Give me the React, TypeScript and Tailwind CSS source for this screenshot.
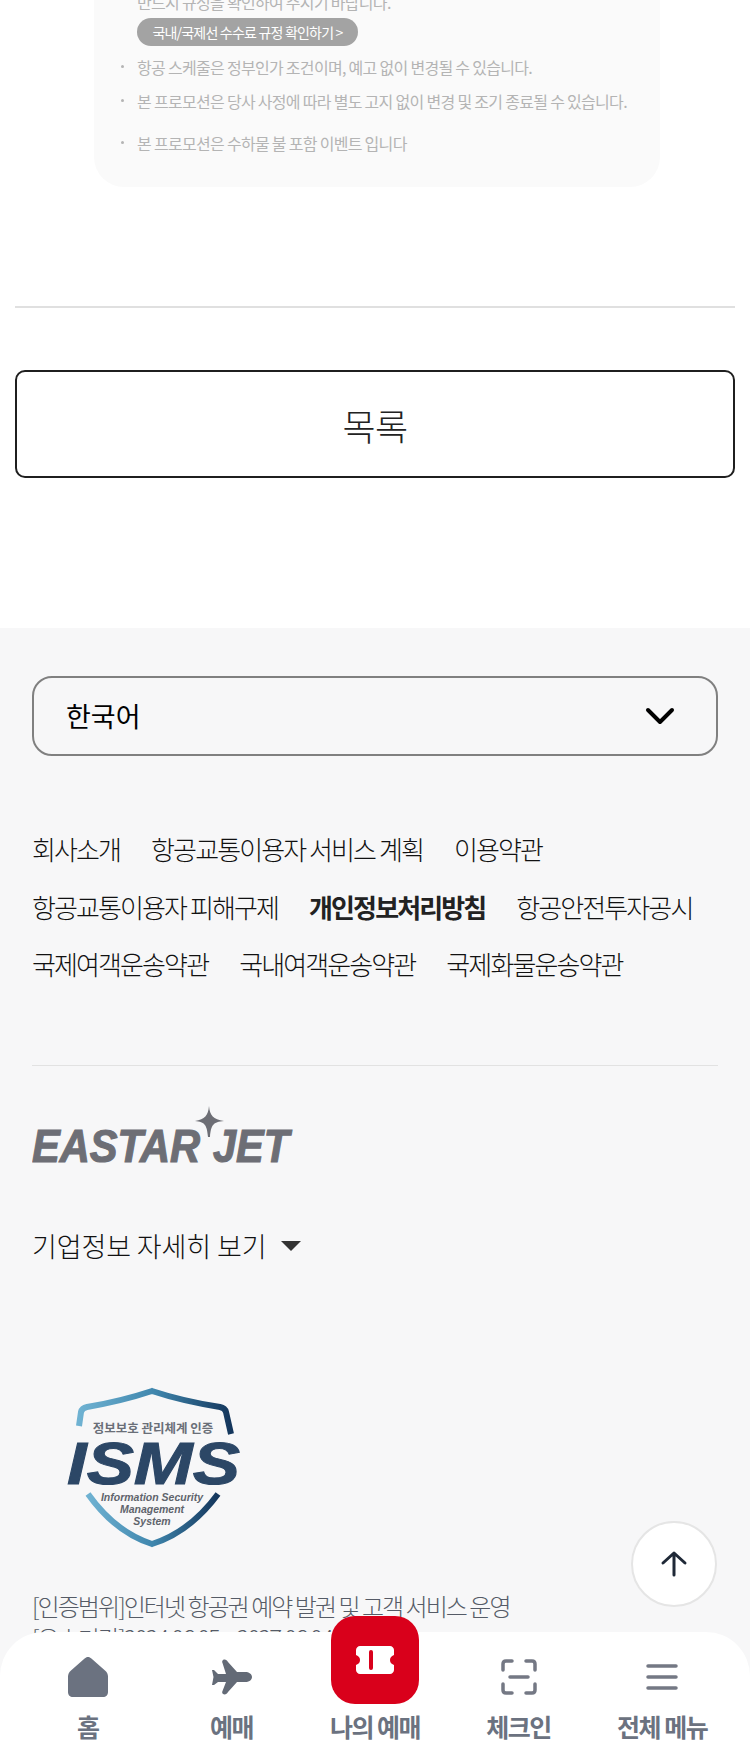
import React from "react";

const KR = "font-['Noto_Sans_CJK_KR','Noto_Sans',sans-serif]";

function Logo() {
  return (
    <svg width="262" height="60" viewBox="0 0 262 60" className="block">
      <g fill="#6d6e75" stroke="#6d6e75" strokeWidth="1.2" fontFamily="Liberation Sans, sans-serif" fontWeight="700" fontStyle="italic">
        <text x="0" y="58" fontSize="47" textLength="168" lengthAdjust="spacingAndGlyphs">EASTAR</text>
        <text x="181" y="58" fontSize="47" textLength="76" lengthAdjust="spacingAndGlyphs">JET</text>
      </g>
      <path d="M177 2c1 10 4 13 15 15-11 1-13 4-14 16h-2c-1-12-3-15-13-16 10-2 13-5 14-15z" fill="#6d6e75" />
    </svg>
  );
}

function Isms() {
  return (
    <svg width="190" height="165" viewBox="0 0 190 165" className="block">
      <defs>
        <linearGradient id="shield" x1="0" y1="0" x2="1" y2="0">
          <stop offset="0" stopColor="#6fb2d2" />
          <stop offset="0.5" stopColor="#3f86ad" />
          <stop offset="1" stopColor="#14365c" />
        </linearGradient>
      </defs>
      <path d="M19 40 L21 26 Q22 22 27 21 Q62 15 92 5 Q122 15 160 21 Q165 22 166 26 L171 48" fill="none" stroke="url(#shield)" strokeWidth="6" />
      <path d="M28 108 Q55 146 92 158 Q130 146 158 108" fill="none" stroke="url(#shield)" strokeWidth="6" />
      <text x="93" y="47" textAnchor="middle" fontSize="12.500" fontWeight="700" fill="#6a6f78" className={KR}>정보보호 관리체계 인증</text>
      <text x="7" y="98" fontSize="59" fontWeight="700" fontStyle="italic" fill="#2c4766" stroke="#2c4766" strokeWidth="1" fontFamily="Liberation Sans, sans-serif" textLength="173" lengthAdjust="spacingAndGlyphs">ISMS</text>
      <g textAnchor="middle" fontSize="10.500" fontWeight="700" fontStyle="italic" fill="#5f646c" fontFamily="Liberation Sans, sans-serif">
        <text x="92" y="115">Information Security</text>
        <text x="92" y="127">Management</text>
        <text x="92" y="139">System</text>
      </g>
    </svg>
  );
}

function NavItem({ label, icon }: { label: string; icon?: React.ReactNode }) {
  return (
    <div className="flex flex-col items-center">
      <div className="flex h-[44px] w-full items-center justify-center">{icon}</div>
      <div className="mt-[9px] whitespace-nowrap text-[25px] font-semibold leading-[36px] tracking-[-1.5px] text-[#6b7280]">{label}</div>
    </div>
  );
}

const links = [
  ["회사소개", "항공교통이용자 서비스 계획", "이용약관"],
  ["항공교통이용자 피해구제", "개인정보처리방침", "항공안전투자공시"],
  ["국제여객운송약관", "국내여객운송약관", "국제화물운송약관"],
];

const bullet = "relative before:absolute before:-left-[16px] before:top-[10px] before:h-[3px] before:w-[3px] before:rounded-full before:bg-[#b4b4b4]";

export default function App() {
  return (
    <div className={`relative h-[1750px] w-[750px] overflow-hidden bg-white ${KR}`}>
      <section className="ml-[94px] -mt-[10px] h-[197px] w-[566px] rounded-b-[30px] bg-[#fafafa] pl-[43px] text-[16px] leading-[24px] tracking-[-0.7px] text-[#b4b4b4]">
        <p>반드시 규정을 확인하여 주시기 바랍니다.</p>
        <div className="mt-[4px] flex h-[28px] w-[221px] items-center justify-center rounded-full bg-[#a3a3a3] text-[14px] tracking-[-0.8px] text-white">
          국내/국제선 수수료 규정 확인하기 &gt;
        </div>
        <ul className="mt-[9px]">
          <li className={`${bullet} h-[24px]`}>항공 스케줄은 정부인가 조건이며, 예고 없이 변경될 수 있습니다.</li>
          <li className={`${bullet} mt-[10px] h-[24px] whitespace-nowrap`}>본 프로모션은 당사 사정에 따라 별도 고지 없이 변경 및 조기 종료될 수 있습니다.</li>
          <li className={`${bullet} mt-[18px] h-[24px]`}>본 프로모션은 수하물 불 포함 이벤트 입니다</li>
        </ul>
      </section>

      <div className="mx-[15px] mt-[119px] h-[2px] bg-[#e0e0e0]" />
      <button className="mx-[15px] mt-[62px] flex h-[108px] w-[720px] items-center justify-center rounded-[10px] border-2 border-[#1f1f1f] pt-[2px] text-[36px] font-light tracking-[-0.5px] text-[#222]">
        목록
      </button>

      <footer className="mt-[150px] h-[1122px] bg-[#f7f7f8] px-[32px] pt-[48px]">
        <div className="flex h-[80px] w-[686px] items-center justify-between rounded-[20px] border-2 border-[#808080] pl-[32px] pr-[41px] text-[27px] text-black">
          <span>한국어</span>
          <svg width="30" height="18" viewBox="0 0 30 18" fill="none" stroke="#000" strokeWidth="4" strokeLinecap="round" strokeLinejoin="round">
            <path d="M3 3l12 12L27 3" />
          </svg>
        </div>

        <div className="mt-[75px] flex flex-col gap-[21.500px] border-b border-[#e2e2e2] pb-[83px]">
          {links.map((row, i) => (
            <div key={i} className="flex h-[36px] items-center gap-[31px] whitespace-nowrap text-[26px] font-light leading-[36px] tracking-[-1.9px] text-[#111]">
              {row.map((t) => (
                <span key={t} className={t === "개인정보처리방침" ? "font-bold text-[#222]" : ""}>{t}</span>
              ))}
            </div>
          ))}
        </div>

        <div className="mt-[38px]"><Logo /></div>

        <div className="mt-[62px] flex items-center gap-[15px] text-[27px] font-light leading-[40px] tracking-[-0.1px] text-[#111]">
          <span>기업정보 자세히 보기</span>
          <span className="h-0 w-0 border-x-[10px] border-t-[10px] border-x-transparent border-t-[#333]" />
        </div>

        <div className="ml-[28px] mt-[120px]"><Isms /></div>

        <p className="mt-[39px] text-[24px] font-light leading-[32px] tracking-[-1.95px] text-[#555b66]">[인증범위]인터넷 항공권 예약 발권 및 고객 서비스 운영</p>
        <p className="text-[24px] font-light leading-[32px] tracking-[-1.95px] text-[#555b66]">[유효기간]2024.06.05 ~ 2027.06.04</p>
      </footer>

      <button className="absolute left-[631px] top-[1521px] flex h-[86px] w-[86px] items-center justify-center rounded-full border-2 border-[#e5e5e5] bg-white">
        <svg width="28" height="28" viewBox="0 0 28 28" fill="none" stroke="#1f2937" strokeWidth="3" strokeLinecap="round" strokeLinejoin="round">
          <path d="M14 25V3M3 13L14 3l11 10" />
        </svg>
      </button>

      <nav className="absolute bottom-0 left-0 grid h-[118px] w-[750px] grid-cols-5 rounded-t-[44px] bg-white px-[16px] pt-[23px]">
        <NavItem label="홈" icon={
          <svg width="40" height="40" viewBox="0 0 40 40"><path d="M20 0c1.400 0 2.400.6 3.400 1.600L37 13.400c2 1.800 3 3.600 3 6.200V35c0 3-2 5-5 5H5c-3 0-5-2-5-5V19.600c0-2.600 1-4.400 3-6.200L16.600 1.600C17.600.6 18.600 0 20 0z" fill="#6b7280" /></svg>
        } />
        <NavItem label="예매" icon={
          <svg width="41" height="36" viewBox="0 0 41 36"><path d="M12 1c2-1 4 0 5 2l9 10h8c4 0 7 2 7 5s-3 5-7 5h-8l-9 10c-1 2-3 3-5 2-1-1-1-2-.5-3L15 23H7l-4 3H1l1.500-8L1 11h2l4 4h8L11.500 4c-.5-1-.5-2 .5-3z" fill="#636a76" /></svg>
        } />
        <NavItem label="나의 예매" />
        <NavItem label="체크인" icon={
          <svg width="36" height="36" viewBox="0 0 36 36" fill="none" stroke="#747884" strokeWidth="3.500" strokeLinecap="round">
            <path d="M2 11V5q0-3 3-3h6M25 2h6q3 0 3 3v6M2 25v6q0 3 3 3h6M25 34h6q3 0 3-3v-6M9 18h18" />
          </svg>
        } />
        <NavItem label="전체 메뉴" icon={
          <svg width="32" height="26" viewBox="0 0 32 26" fill="none" stroke="#747884" strokeWidth="3.500" strokeLinecap="round">
            <path d="M2 2h28M2 13h28M2 24h28" />
          </svg>
        } />
      </nav>

      <div className="absolute left-[331px] top-[1616px] flex h-[88px] w-[88px] items-center justify-center rounded-[24px] bg-[#d9001b]">
        <svg width="38" height="28" viewBox="0 0 38 28">
          <path d="M4 0h30c2 0 4 2 4 4v5c-3 1-4 3-4 5s1 4 4 5v5c0 2-2 4-4 4H4c-2 0-4-2-4-4v-5c3-1 4-3 4-5s-1-4-4-5V4c0-2 2-4 4-4z" fill="#fff" />
          <rect x="13" y="4" width="4" height="20" rx="2" fill="#d9001b" />
        </svg>
      </div>
    </div>
  );
}
